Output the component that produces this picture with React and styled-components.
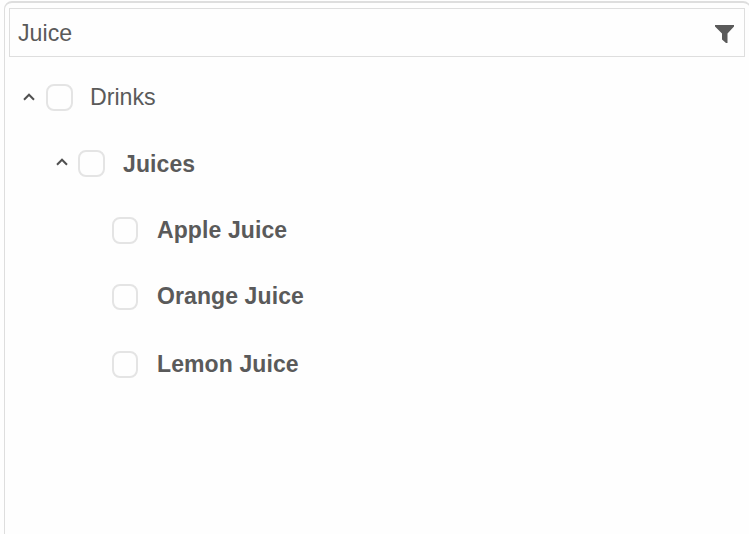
import React from "react";
import styled, { createGlobalStyle } from "styled-components";

const GlobalStyle = createGlobalStyle`
  * { box-sizing: border-box; }
  body {
    margin: 0;
    overflow: hidden;
    background: #fefefe;
    color: #5a5a5a;
    font-family: "Liberation Sans", Arial, sans-serif;
  }
`;

const Page = styled.div`
  height: 534px;
  overflow: hidden;
  padding: 1px 0 0 4px;
`;

const Panel = styled.div`
  width: 747px;
  height: 560px;
  padding: 5px 5px 0 4px;
  border: 1px solid #dedede;
  border-top-width: 2px;
  border-radius: 8px;
`;

const SearchBox = styled.label`
  display: flex;
  align-items: center;
  width: 736px;
  height: 49px;
  padding: 0 10px 0 8px;
  border: 1px solid #dedede;
  background: #fefefe;
`;

const SearchInput = styled.input`
  flex: 1;
  min-width: 0;
  height: 30px;
  margin-top: 2px;
  padding: 0;
  border: 0;
  outline: 0;
  background: transparent;
  color: inherit;
  font: 23.2px "Liberation Sans", Arial, sans-serif;
`;

const FilterIcon = styled.svg`
  width: 19px;
  height: 18px;
  margin-top: 2px;
  fill: #5a5a5a;
`;

const Tree = styled.div`
  padding-top: 7px;
`;

const Row = styled.div`
  display: flex;
  align-items: center;
  height: ${(p) => p.$height}px;
  padding-left: ${(p) => p.$indent}px;
`;

const Toggle = styled.span`
  display: flex;
  width: ${(p) => p.$width}px;
  margin-top: ${(p) => p.$shift}px;
`;

const Chevron = styled.svg`
  width: 12px;
  height: 8px;
  fill: none;
  stroke: #505050;
  stroke-width: 2;
`;

const Checkbox = styled.span`
  width: ${(p) => p.$size}px;
  height: ${(p) => p.$height || 27}px;
  flex: none;
  border: 2px solid #e4e4e4;
  border-radius: 8px;
  background: #fefefe;
`;

const Label = styled.span`
  margin-top: ${(p) => p.$drop || 0}px;
  margin-left: ${(p) => p.$gap}px;
  font-size: ${(p) => (p.$bold ? 23 : 23.2)}px;
  font-weight: ${(p) => (p.$bold ? 700 : 400)};
  letter-spacing: ${(p) => (p.$bold ? 0.1 : 0)}px;
  line-height: 27px;
  white-space: nowrap;
`;

const nodes = [
  { text: "Drinks", indent: 14, height: 67, toggle: 23, shift: -1, size: 27, gap: 17 },
  { text: "Juices", indent: 47, height: 65, toggle: 22, shift: -4, size: 27, gap: 18, drop: 2, bold: true },
  { text: "Apple Juice", indent: 103, height: 68, size: 26, gap: 19, bold: true },
  { text: "Orange Juice", indent: 103, height: 66, size: 26, box: 26, gap: 19, drop: -2, bold: true },
  { text: "Lemon Juice", indent: 103, height: 69, size: 26, gap: 19, bold: true },
];

export default function App() {
  return (
    <Page>
      <GlobalStyle />
      <Panel>
        <SearchBox>
          <SearchInput defaultValue="Juice" aria-label="Filter" />
          <FilterIcon viewBox="0 0 19 18">
            <path d="M0 0h19v1.5L12.5 8.5V18H11L7 14.5v-6L0 1.5z" />
          </FilterIcon>
        </SearchBox>
        <Tree role="tree">
          {nodes.map((n) => (
            <Row key={n.text} role="treeitem" $height={n.height} $indent={n.indent}>
              {n.toggle && (
                <Toggle $width={n.toggle} $shift={n.shift}>
                  <Chevron viewBox="0 0 12 8">
                    <path d="M1 6.7 6 1.7l5 5" />
                  </Chevron>
                </Toggle>
              )}
              <Checkbox role="checkbox" aria-checked="false" $size={n.size} $height={n.box} />
              <Label $gap={n.gap} $drop={n.drop} $bold={n.bold}>{n.text}</Label>
            </Row>
          ))}
        </Tree>
      </Panel>
    </Page>
  );
}
